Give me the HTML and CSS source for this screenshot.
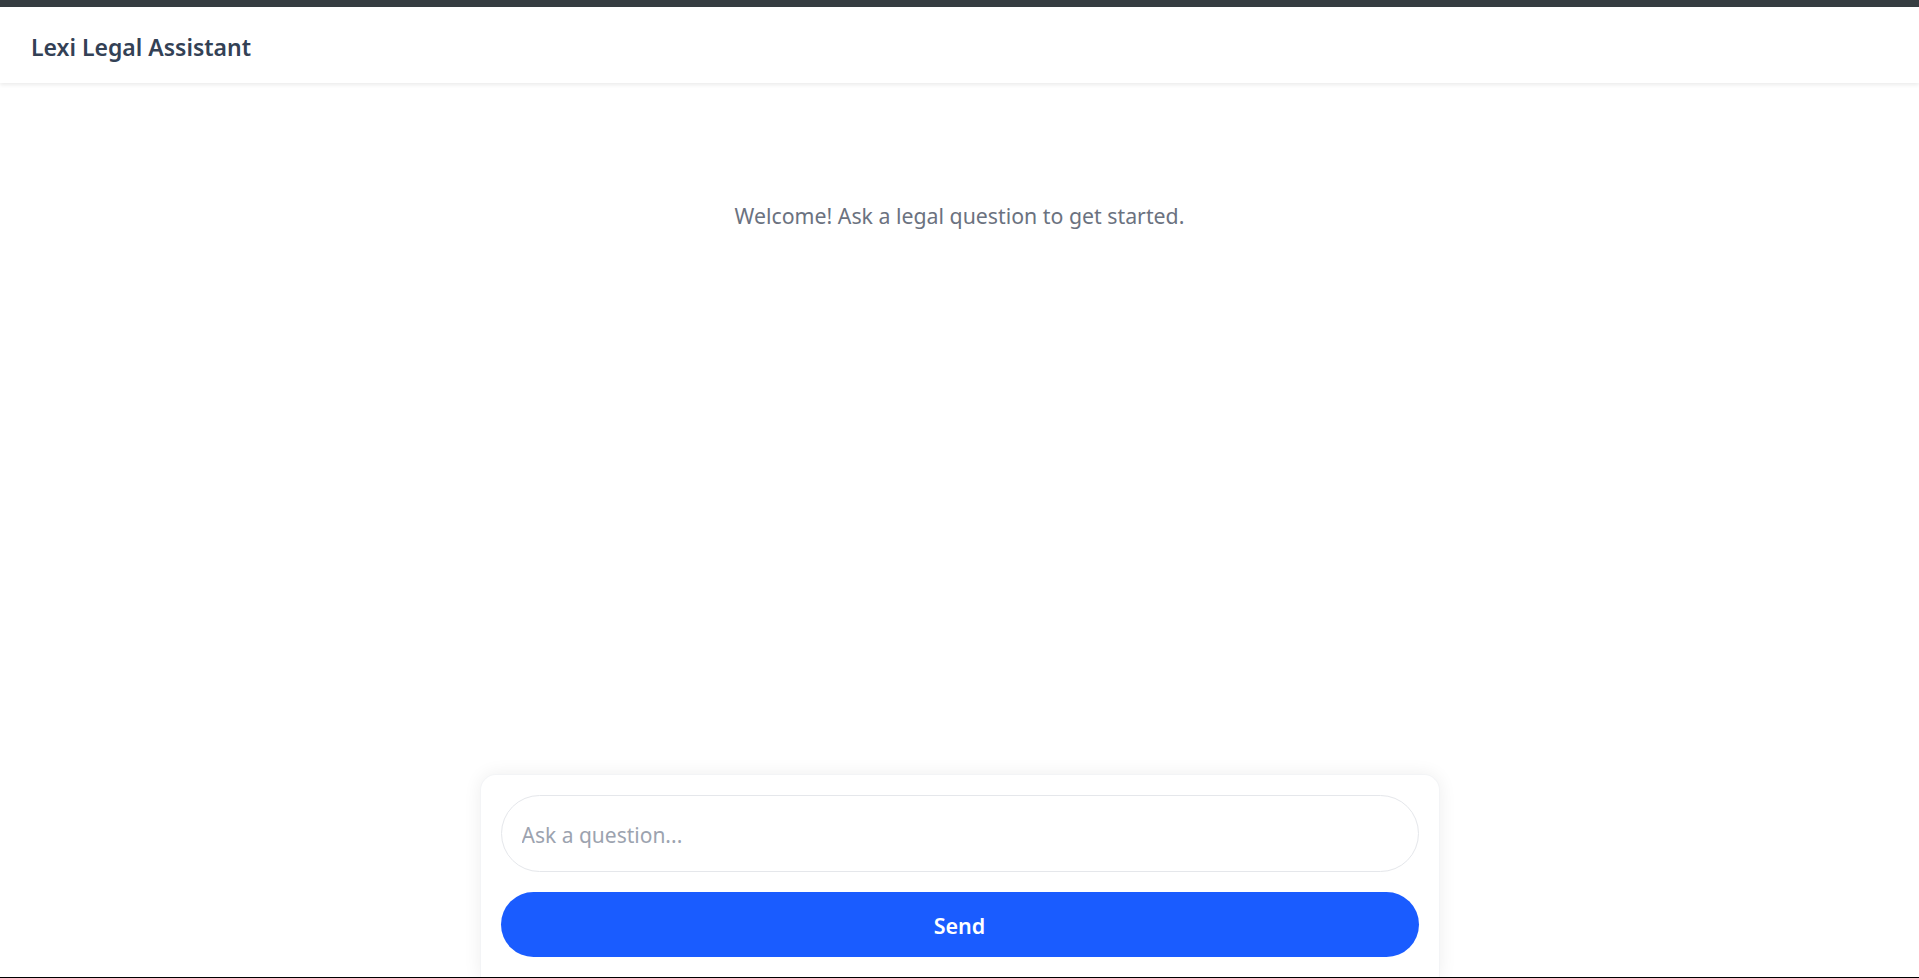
FILE: index.html
```html
<!DOCTYPE html>
<html lang="en">
<head>
<meta charset="utf-8">
<title>Lexi Legal Assistant</title>
<link rel="stylesheet" href="styles.css">
</head>
<body>
<div class="app">
  <div class="topbar"></div>
  <header class="header">
    <h1 class="title">Lexi Legal Assistant</h1>
  </header>
  <main class="chat">
    <p class="welcome">Welcome! Ask a legal question to get started.</p>
  </main>
  <form class="composer">
    <input class="question" type="text" placeholder="Ask a question...">
    <button class="send" type="button">Send</button>
  </form>
</div>
</body>
</html>
```

FILE: styles.css
```css
* { box-sizing: border-box; }
html, body {
  margin: 0;
  padding: 0;
  height: 100%;
  background: #ffffff;
  font-family: "Noto Sans", "Open Sans", Arial, sans-serif;
}
.app {
  height: 100vh;
  display: flex;
  flex-direction: column;
  border-bottom: 1px solid #000000;
  overflow: hidden;
}
.topbar {
  height: 7px;
  flex: 0 0 7px;
  background: #363d41;
}
.header {
  flex: 0 0 76px;
  display: flex;
  align-items: center;
  padding: 3px 31px 0;
  background: #ffffff;
  box-shadow: 0 2px 4px rgba(0, 0, 0, 0.08);
  position: relative;
  z-index: 1;
}
.title {
  margin: 0;
  font-size: 23px;
  font-weight: 600;
  color: #334155;
}
.chat {
  flex: 1;
  display: flex;
  flex-direction: column;
  align-items: center;
  padding-top: 118px;
}
.welcome {
  margin: 0;
  font-size: 21.3px;
  line-height: 30px;
  color: #6b7280;
}
.composer {
  width: 960px;
  margin: 0 auto;
  padding: 20px;
  display: flex;
  flex-direction: column;
  gap: 20px;
  border: 1px solid #f3f4f6;
  border-bottom: none;
  border-radius: 16px 16px 0 0;
  box-shadow: 0 0 18px rgba(0, 0, 0, 0.07);
  background: #ffffff;
}
.question {
  height: 77px;
  width: 100%;
  border: 1px solid #e5e7eb;
  border-radius: 40px;
  padding: 2px 20px 0;
  font-family: inherit;
  font-size: 21px;
  color: #111827;
  outline: none;
}
.question::placeholder { color: #9ca3af; }
.send {
  height: 65px;
  width: 100%;
  border: none;
  border-radius: 33px;
  background: #1a5cff;
  color: #ffffff;
  font-family: inherit;
  font-size: 21.5px;
  font-weight: 600;
  padding: 2px 0 0;
  cursor: pointer;
}
```
